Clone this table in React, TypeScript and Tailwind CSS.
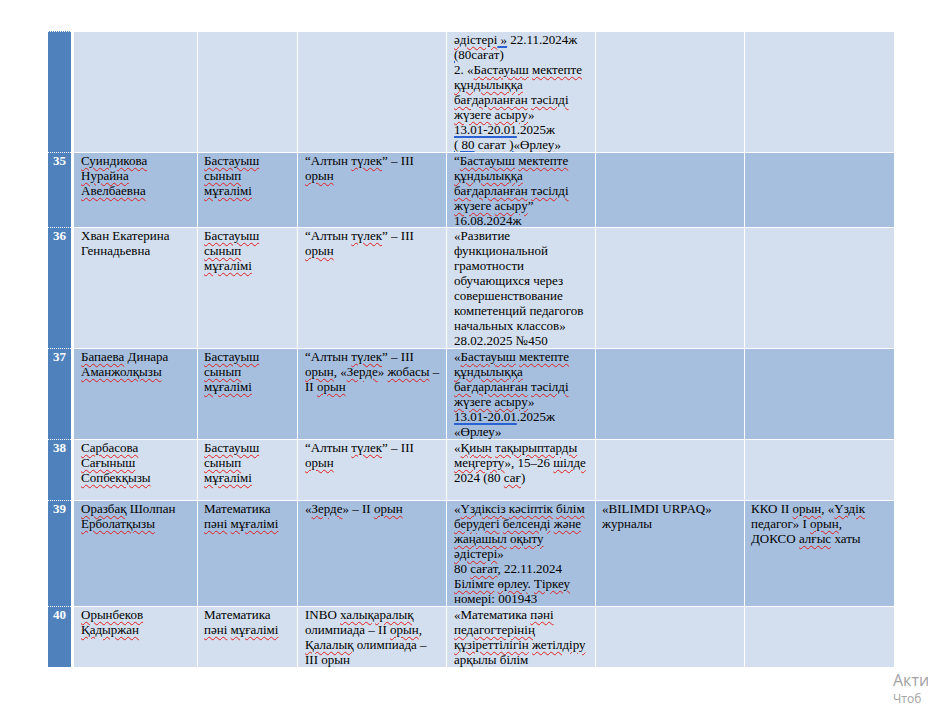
import * as React from "react";

// --- Inline marks (Word spell / grammar squiggles) ---
function W({children}: {children: React.ReactNode}) {
    return (
        <span className="underline decoration-wavy decoration-[#e02020] decoration-1 underline-offset-[2px]">
            {children}
        </span>
    );
}

function G({children}: {children: React.ReactNode}) {
    return (
        <span className="underline decoration-[#2a62d4] decoration-[1.5px] underline-offset-[2px]">
            {children}
        </span>
    );
}

type Line = React.ReactNode;

interface Row {
    num: string;
    height: string;
    shade: "light" | "dark";
    cells: Line[][];
}

// --- Shared cell text ---
const teacherPrimary: Line[] = [
    <W>Бастауыш</W>,
    <W>сынып</W>,
    <W>мұғалімі</W>,
];

const teacherMath: Line[] = [
    <>Математика</>,
    <><W>пәні</W> <W>мұғалімі</W></>,
];

const altynTulek: Line[] = [
    <>“Алтын <W>түлек</W>” – III</>,
    <W>орын</W>,
];

const rows: Row[] = [
    {
        num: "",
        height: "h-[121px]",
        shade: "light",
        cells: [
            [],
            [],
            [],
            [
                <><W>әдістері</W><G> »</G> 22.11.2024ж</>,
                <><G>(</G>80сағат)</>,
                <>2. «<W>Бастауыш</W> <W>мектепте</W></>,
                <W>құндылыққа</W>,
                <><W>бағдарланған</W> <W>тәсілді</W></>,
                <><W>жүзеге</W> <W>асыру</W>»</>,
                <><G>13.01-20.01</G>.2025ж</>,
                <><G>( 80</G> <W>сағат</W> <G>)</G>«<W>Өрлеу</W>»</>,
            ],
            [],
            [],
        ],
    },
    {
        num: "35",
        height: "h-[75px]",
        shade: "dark",
        cells: [
            [<W>Суиндикова</W>, <W>Нурайна</W>, <W>Авелбаевна</W>],
            teacherPrimary,
            altynTulek,
            [
                <>“<W>Бастауыш</W> <W>мектепте</W></>,
                <W>құндылыққа</W>,
                <><W>бағдарланған</W> <W>тәсілді</W></>,
                <><W>жүзеге</W> <W>асыру</W>”</>,
                <>16.08.2024ж</>,
            ],
            [],
            [],
        ],
    },
    {
        num: "36",
        height: "h-[121px]",
        shade: "light",
        cells: [
            [<>Хван Екатерина</>, <>Геннадьевна</>],
            teacherPrimary,
            altynTulek,
            [
                <>«Развитие</>,
                <>функциональной</>,
                <>грамотности</>,
                <>обучающихся через</>,
                <>совершенствование</>,
                <>компетенций педагогов</>,
                <>начальных классов»</>,
                <>28.02.2025 №450</>,
            ],
            [],
            [],
        ],
    },
    {
        num: "37",
        height: "h-[91px]",
        shade: "dark",
        cells: [
            [<><W>Бапаева</W> Динара</>, <W>Аманжолқызы</W>],
            teacherPrimary,
            [
                <>“Алтын <W>түлек</W>” – III</>,
                <><W>орын</W>, «<W>Зерде</W>» <W>жобасы</W> –</>,
                <>II <W>орын</W></>,
            ],
            [
                <>«<W>Бастауыш</W> <W>мектепте</W></>,
                <W>құндылыққа</W>,
                <><W>бағдарланған</W> <W>тәсілді</W></>,
                <><W>жүзеге</W> <W>асыру</W>»</>,
                <><G>13.01-20.01</G>.2025ж</>,
                <>«<W>Өрлеу</W>»</>,
            ],
            [],
            [],
        ],
    },
    {
        num: "38",
        height: "h-[61px]",
        shade: "light",
        cells: [
            [<W>Сарбасова</W>, <W>Сағыныш</W>, <W>Сопбекқызы</W>],
            teacherPrimary,
            altynTulek,
            [
                <>«<W>Қиын</W> <W>тақырыптарды</W></>,
                <><W>меңгерту</W>», 15–26 <W>шілде</W></>,
                <>2024 (80 <W>сағ</W>)</>,
            ],
            [],
            [],
        ],
    },
    {
        num: "39",
        height: "h-[106px]",
        shade: "dark",
        cells: [
            [<><W>Оразбақ</W> Шолпан</>, <W>Ерболатқызы</W>],
            teacherMath,
            [<>«<W>Зерде</W>» – II <W>орын</W></>],
            [
                <>«<W>Үздіксіз</W> <W>кәсіптік</W> <W>білім</W></>,
                <><W>берудегі</W> <W>белсенді</W> <W>және</W></>,
                <><W>жаңашыл</W> <W>оқыту</W></>,
                <><W>әдістері</W>»</>,
                <>80 <W>сағат</W>, 22.11.2024</>,
                <><W>Білімге</W> <W>өрлеу</W>. <W>Тіркеу</W></>,
                <><W>номері</W>: 001943</>,
            ],
            [<>«BILIMDI URPAQ»</>, <>журналы</>],
            [
                <>ККО II <W>орын</W>, «<W>Үздік</W></>,
                <>педагог» I <W>орын</W>,</>,
                <>ДОКСО <W>алғыс</W> хаты</>,
            ],
        ],
    },
    {
        num: "40",
        height: "h-[61px]",
        shade: "light",
        cells: [
            [<W>Орынбеков</W>, <W>Қадыржан</W>],
            teacherMath,
            [
                <>INBO <W>халықаралық</W></>,
                <>олимпиада – II <W>орын</W>,</>,
                <><W>Қалалық</W> олимпиада –</>,
                <>III <W>орын</W></>,
            ],
            [
                <>«Математика <W>пәні</W></>,
                <W>педагогтерінің</W>,
                <><W>құзіреттілігін</W> <W>жетілдіру</W></>,
                <><W>арқылы</W> <W>білім</W></>,
            ],
            [],
            [],
        ],
    },
];

// column widths incl. the white left rule
const colClasses = [
    "w-[126px] border-l-[3px] pl-[7px]",
    "w-[100px] border-l pl-[6px]",
    "w-[149px] border-l pl-[7px]",
    "w-[149px] border-l pl-[7px]",
    "w-[149px] border-l pl-[6px]",
    "w-[150px] border-l pl-[6px]",
];

export default function App() {
    return (
        <div
            className="relative w-[928px] h-[715px] overflow-hidden bg-white text-black"
            style={{fontFamily: '"Liberation Serif", "Times New Roman", serif'}}
        >
            {/* Table */}
            <div className="flex flex-col pt-[31px] pl-[48px] text-[13px] leading-[15px]">
                {rows.map((row, i) => (
                    <div key={i} className={`flex ${row.height}`}>
                        {/* Number column */}
                        <div className="w-[23px] shrink-0 bg-[#4f81bd] border-t border-dotted border-white text-center font-bold text-white">
                            {row.num}
                        </div>
                        {row.cells.map((lines, c) => (
                            <div
                                key={c}
                                className={`${colClasses[c]} shrink-0 overflow-hidden border-t border-white ${
                                    row.shade === "light" ? "bg-[#d3dfee]" : "bg-[#a7bfde]"
                                }`}
                            >
                                {lines.map((line, l) => (
                                    <div key={l} className="whitespace-nowrap">{line}</div>
                                ))}
                            </div>
                        ))}
                    </div>
                ))}
            </div>

            {/* Windows activation watermark (only the part on screen) */}
            <div
                className="absolute left-[893px] top-[669px] whitespace-nowrap text-[#a3a3a3]"
                style={{fontFamily: '"Open Sans", "Noto Sans", sans-serif'}}
            >
                <div className="text-[16px] leading-[22px]">Акти</div>
                <div className="text-[12px] leading-[16px]">Чтоб</div>
            </div>
        </div>
    );
}
